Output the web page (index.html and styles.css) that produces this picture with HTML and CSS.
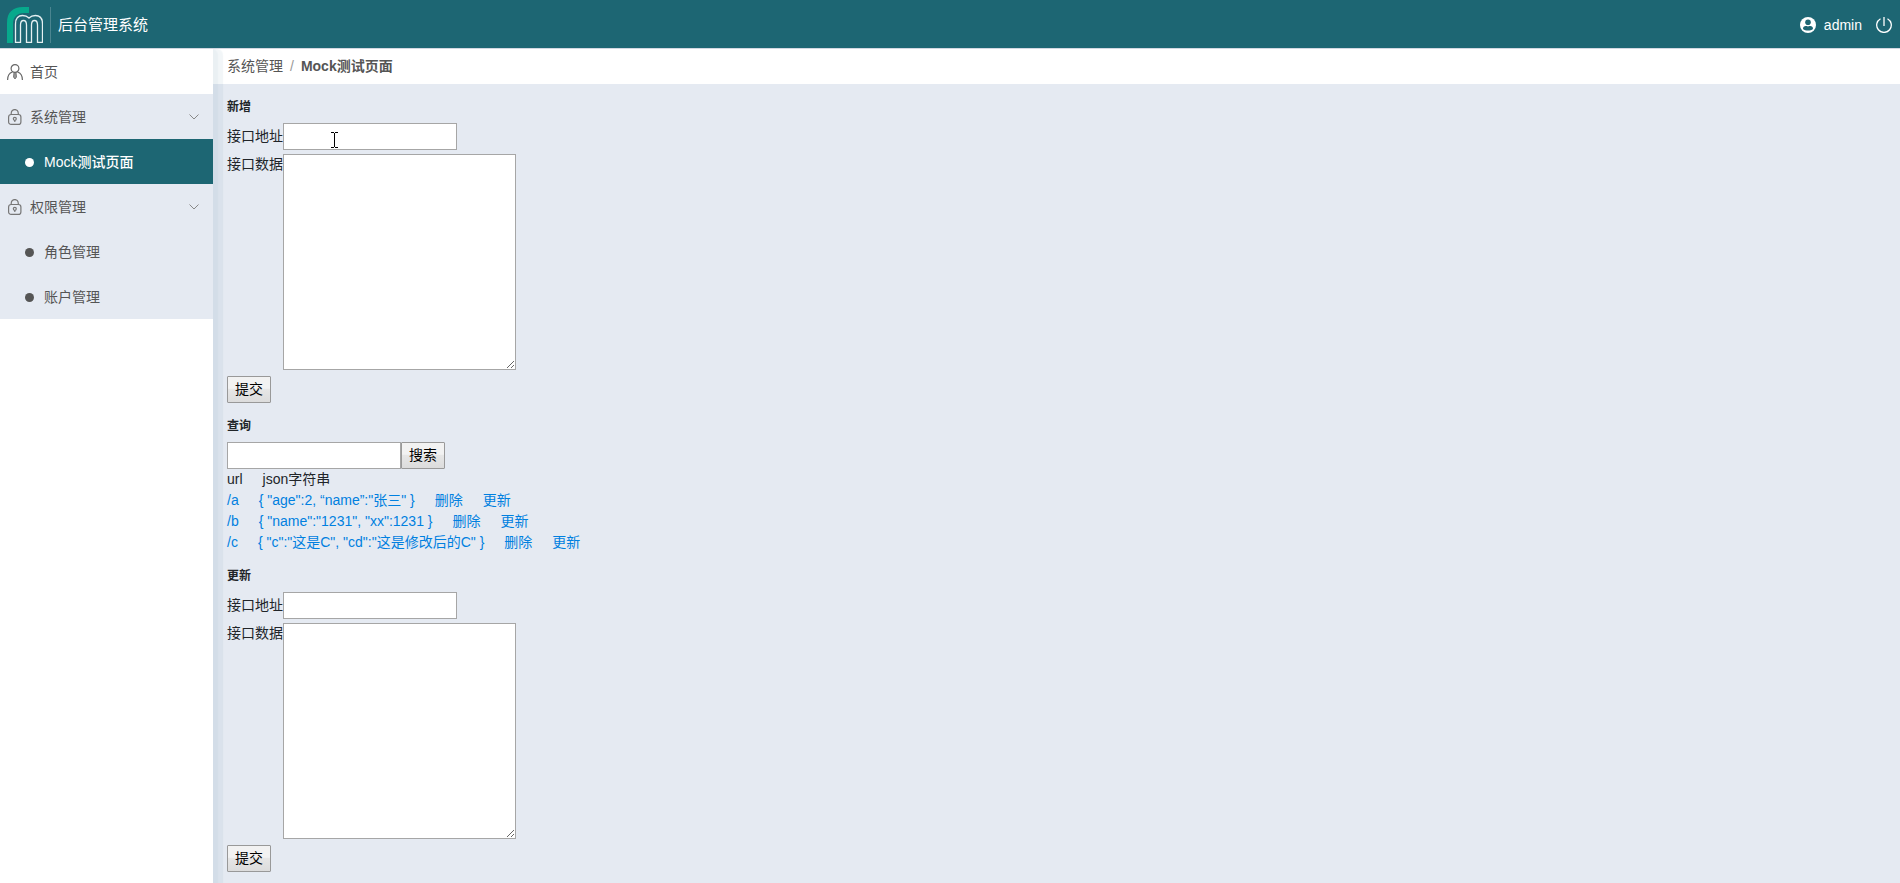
FILE: index.html
```html
<!DOCTYPE html>
<html lang="zh-CN">
<head>
<meta charset="utf-8">
<title>后台管理系统</title>
<link rel="stylesheet" href="styles.css">
</head>
<body>
<header class="topbar">
  <div class="brand">
    <svg class="logo" viewBox="0 0 36 36" fill="none">
      <path d="M0 36V16C0 5 6 0 16 0H22V6H17C10 6 6 10 6 17V36Z" fill="#07a98c"/>
      <path d="M8.500 35.500V17C8.500 11 11.500 8.500 15.500 8.500C18.500 8.500 20.500 9.500 22 11C23.500 9.500 25.500 8.500 28.500 8.500C32.500 8.500 35.500 11 35.500 17V35.500H30.500V18C30.500 14.500 29.500 13.500 27.500 13.500C25.500 13.500 24.500 14.500 24.500 18V35.500H19.500V18C19.500 14.500 18.500 13.500 16.500 13.500C14.500 13.500 13.500 14.500 13.500 18V35.500Z" fill="#1d6673" stroke="#e6f0f2" stroke-width="1.300"/>
    </svg>
    <span class="brand-name">后台管理系统</span>
  </div>
  <div class="account">
    <svg class="avatar" viewBox="0 0 16 16"><circle cx="8" cy="8" r="8" fill="#fff"/><circle cx="8" cy="5.300" r="2.800" fill="#1d6673"/><path d="M3 12C3 8.800 5.500 8.600 8 9.500C10.500 8.600 13 8.800 13 12C10.500 14 5.500 14 3 12Z" fill="#1d6673"/></svg>
    <span>admin</span>
    <button class="power" type="button" aria-label="退出"><svg viewBox="0 0 16 16" fill="none" stroke="#fff" stroke-width="1.300"><path d="M8 0V9M4.500 1.700A7.300 7.300 0 1 0 11.500 1.700"/></svg></button>
  </div>
</header>
<div class="layout">
  <nav class="sidebar">
    <a class="item home" href="#"><svg class="icon" viewBox="0 0 16 16" fill="none" stroke="#666" stroke-width="1.200"><circle cx="8" cy="4.500" r="3.900"/><path d="M5.500 8C2 9 .6 11.500 .6 16M10.500 8C14 9 15.400 11.500 15.400 16"/><path d="M7 8.500H9L9.500 13L8 15L6.500 13Z" fill="#999" stroke-width=".8"/></svg><span>首页</span></a>
    <a class="item" href="#"><svg class="icon" viewBox="0 0 16 16" fill="none" stroke="#777" stroke-width="1.200"><rect x="1.600" y="5.500" width="12.300" height="9.900" rx="2.500"/><path d="M4.200 5.500V4.500C4.200 -.8 11.300 -.8 11.300 4.500V5.500M7.800 11V13"/><circle cx="7.800" cy="9.800" r="1.500"/></svg><span>系统管理</span><svg class="arrow" viewBox="0 0 10 6" fill="none" stroke="#888"><path d="M.5 .5L5 5L9.500 .5"/></svg></a>
    <a class="item sub active" href="#"><i class="dot"></i><span>Mock测试页面</span></a>
    <a class="item" href="#"><svg class="icon" viewBox="0 0 16 16" fill="none" stroke="#777" stroke-width="1.200"><rect x="1.600" y="5.500" width="12.300" height="9.900" rx="2.500"/><path d="M4.200 5.500V4.500C4.200 -.8 11.300 -.8 11.300 4.500V5.500M7.800 11V13"/><circle cx="7.800" cy="9.800" r="1.500"/></svg><span>权限管理</span><svg class="arrow" viewBox="0 0 10 6" fill="none" stroke="#888"><path d="M.5 .5L5 5L9.500 .5"/></svg></a>
    <a class="item sub" href="#"><i class="dot"></i><span>角色管理</span></a>
    <a class="item sub" href="#"><i class="dot"></i><span>账户管理</span></a>
  </nav>
  <main class="main">
    <div class="breadcrumb"><a href="#">系统管理</a><span class="slash">/</span><strong>Mock测试页面</strong></div>
    <div class="content">
      <section>
        <h6>新增</h6>
        <div class="field"><label for="add-url">接口地址</label><input class="text" id="add-url" type="text"></div>
        <div class="field"><label for="add-data">接口数据</label><textarea id="add-data"></textarea></div>
        <button class="btn submit" type="button">提交</button>
        <svg class="cursor" viewBox="0 0 7 16" fill="none" stroke="#000"><path d="M0 .5H3M4 .5H7M3.500 1V15M0 15.500H3M4 15.500H7"/></svg>
      </section>
      <section>
        <h6>查询</h6>
        <div class="search"><input class="text" type="text" aria-label="查询"><button class="btn" type="button">搜索</button></div>
        <div class="row"><span>url</span><span>json字符串</span></div>
        <div class="row"><a href="#">/a</a><a href="#">{ "age":2, “name”:"张三" }</a><a href="#">删除</a><a href="#">更新</a></div>
        <div class="row"><a href="#">/b</a><a href="#">{ "name":"1231", "xx":1231 }</a><a href="#">删除</a><a href="#">更新</a></div>
        <div class="row"><a href="#">/c</a><a href="#">{ "c":"这是C", "cd":"这是修改后的C" }</a><a href="#">删除</a><a href="#">更新</a></div>
      </section>
      <section>
        <h6>更新</h6>
        <div class="field"><label for="edit-url">接口地址</label><input class="text" id="edit-url" type="text"></div>
        <div class="field"><label for="edit-data">接口数据</label><textarea id="edit-data"></textarea></div>
        <button class="btn submit" type="button">提交</button>
      </section>
    </div>
  </main>
</div>
</body>
</html>
```
FILE: styles.css
```css
* { box-sizing: border-box; }
body {
  margin: 0;
  min-height: 100vh;
  display: flex;
  flex-direction: column;
  background: #e5eaf2;
  color: #212529;
  font: 14px/21px "Liberation Sans", "Noto Sans CJK SC", sans-serif;
}
a { color: #0080e0; text-decoration: none; }
svg { display: block; flex: none; }
button, input, textarea { font: inherit; }

.topbar {
  display: flex;
  align-items: center;
  justify-content: space-between;
  height: 49px;
  padding: 2px 8px 0 7px;
  background: #1d6673;
  border-bottom: 1px solid #d2d8e2;
  color: #fff;
}
.brand { display: flex; align-items: center; }
.logo { width: 36px; height: 36px; }
.brand-name {
  margin-left: 7px;
  padding-left: 7px;
  border-left: 1px solid #4b8590;
  font-size: 15px;
  line-height: 36px;
}
.account { display: flex; align-items: center; gap: 8px; }
.avatar { width: 16px; height: 16px; }
.power { margin-left: 6px; padding: 0; border: 0; background: none; }
.power svg { width: 16px; height: 16px; }

.layout { flex: 1; display: flex; }
.sidebar {
  position: relative;
  flex: none;
  width: 213px;
  background: #fff;
  border-top-right-radius: 6px;
  box-shadow: 5px 0 1px rgba(90, 140, 160, .05), 10px 0 1px rgba(90, 140, 160, .08);
}
.item {
  display: flex;
  align-items: center;
  height: 45px;
  padding: 2px 14px 0 7px;
  background: #e5eaf2;
  color: #555;
}
.home { background: #fff; }
.icon { width: 16px; height: 16px; margin: 0 7px 2px 0; }
.arrow { width: 10px; height: 6px; margin: 0 0 2px auto; }
.sub { padding-left: 25px; }
.dot { width: 9px; height: 9px; margin: 0 10px 1px 0; border-radius: 50%; background: currentColor; }
.active { background: #1d6673; color: #fff; font-weight: 500; }

.main { flex: 1; min-width: 0; }
.breadcrumb { height: 35px; padding: 7px 14px; background: #fff; color: #555; }
.breadcrumb a { color: #555; }
.slash { padding: 0 7px; color: #999; }
.content { padding: 14px; }
section { position: relative; margin-bottom: 14px; }
section:last-child { margin-bottom: 0; }
h6 { margin: 0 0 7px; font-size: 12px; line-height: 18px; }
.field { display: flex; margin-bottom: 4px; }
.field label { width: 56px; }
.field label[for$="url"] { padding-top: 3px; }
.text { width: 174px; height: 27px; margin: 0; padding: 2px; border: 1px solid #a6a6a6; background: #fff; }
textarea { width: 233px; height: 216px; padding: 2px; border: 1px solid #a6a6a6; background: #fff; resize: both; }
.btn {
  display: block;
  height: 27px;
  padding: 0 7px;
  border: 1px solid #999;
  border-radius: 1px;
  background: linear-gradient(#f2f2f2 0 45%, #e6e6e6 50%, #dcdcdc);
  color: #000;
}
.submit { margin-top: 6px; }
.search { display: flex; }
.row { display: flex; gap: 20px; }
.cursor { position: absolute; left: 104px; top: 34px; width: 7px; height: 16px; }
```
